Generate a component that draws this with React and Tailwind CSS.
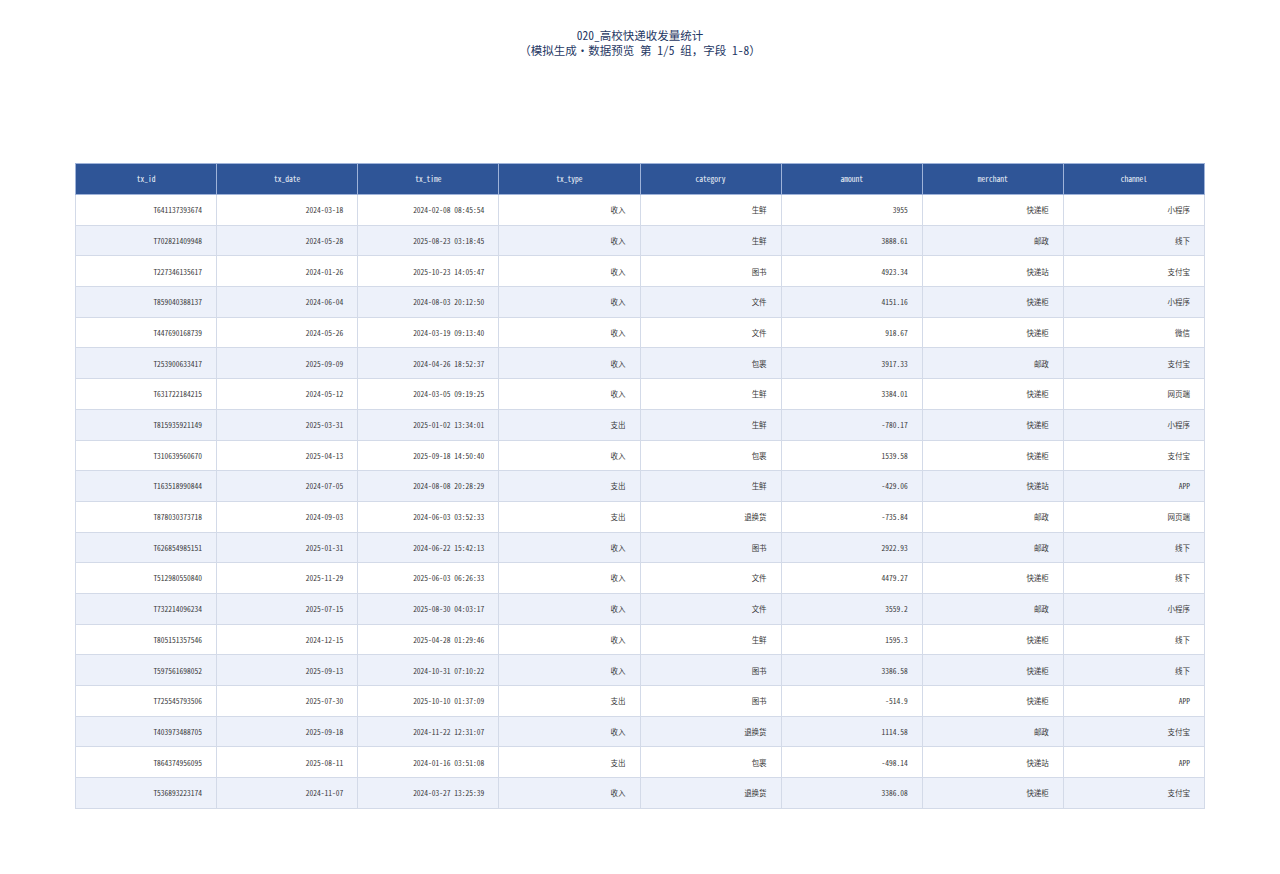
import React from "react";

const cols = ["tx_id", "tx_date", "tx_time", "tx_type", "category", "amount", "merchant", "channel"];

const rows = [
  ["T641137393674", "2024-03-18", "2024-02-08 08:45:54", "收入", "生鲜", "3955", "快递柜", "小程序"],
  ["T702821409948", "2024-05-28", "2025-08-23 03:18:45", "收入", "生鲜", "3888.61", "邮政", "线下"],
  ["T227346135617", "2024-01-26", "2025-10-23 14:05:47", "收入", "图书", "4923.34", "快递站", "支付宝"],
  ["T859040388137", "2024-06-04", "2024-08-03 20:12:50", "收入", "文件", "4151.16", "快递柜", "小程序"],
  ["T447690168739", "2024-05-26", "2024-03-19 09:13:40", "收入", "文件", "918.67", "快递柜", "微信"],
  ["T253900633417", "2025-09-09", "2024-04-26 18:52:37", "收入", "包裹", "3917.33", "邮政", "支付宝"],
  ["T631722184215", "2024-05-12", "2024-03-05 09:19:25", "收入", "生鲜", "3384.01", "快递柜", "网页端"],
  ["T815935921149", "2025-03-31", "2025-01-02 13:34:01", "支出", "生鲜", "-780.17", "快递柜", "小程序"],
  ["T310639560670", "2025-04-13", "2025-09-18 14:50:40", "收入", "包裹", "1539.58", "快递柜", "支付宝"],
  ["T163518990844", "2024-07-05", "2024-08-08 20:28:29", "支出", "生鲜", "-429.06", "快递站", "APP"],
  ["T878030373718", "2024-09-03", "2024-06-03 03:52:33", "支出", "退换货", "-735.84", "邮政", "网页端"],
  ["T626854985151", "2025-01-31", "2024-06-22 15:42:13", "收入", "图书", "2922.93", "邮政", "线下"],
  ["T512980550840", "2025-11-29", "2025-06-03 06:26:33", "收入", "文件", "4479.27", "快递柜", "线下"],
  ["T732214096234", "2025-07-15", "2025-08-30 04:03:17", "收入", "文件", "3559.2", "邮政", "小程序"],
  ["T805151357546", "2024-12-15", "2025-04-28 01:29:46", "收入", "生鲜", "1595.3", "快递柜", "线下"],
  ["T597561698052", "2025-09-13", "2024-10-31 07:10:22", "收入", "图书", "3386.58", "快递柜", "线下"],
  ["T725545793506", "2025-07-30", "2025-10-10 01:37:09", "支出", "图书", "-514.9", "快递柜", "APP"],
  ["T403973488705", "2025-09-18", "2024-11-22 12:31:07", "收入", "退换货", "1114.58", "邮政", "支付宝"],
  ["T864374956095", "2025-08-11", "2024-01-16 03:51:08", "支出", "包裹", "-498.14", "快递站", "APP"],
  ["T536893223174", "2024-11-07", "2024-03-27 13:25:39", "收入", "退换货", "3386.08", "快递柜", "支付宝"],
];

const font = { fontFamily: '"Noto Sans Mono CJK SC", "DejaVu Sans Mono", "Noto Sans CJK SC", monospace' };

export default function App() {
  return (
    <div className="w-[1280px] h-[874px] bg-white px-[75px] pt-[28px]" style={font}>
      <div className="text-center text-[11.5px] leading-[15px] text-[#1f3864]">
        <div>020_高校快递收发量统计</div>
        <div>（模拟生成·数据预览 第 1/5 组，字段 1-8）</div>
      </div>

      <table className="mt-[105px] w-[1130px] table-fixed border-collapse">
        <thead>
          <tr className="h-[31px] bg-[#2f5597]">
            {cols.map((c) => (
              <th
                key={c}
                className="border border-[#9fb3d9] text-center text-[7.5px] font-normal text-[#f2f5fb]"
              >
                {c}
              </th>
            ))}
          </tr>
        </thead>
        <tbody>
          {rows.map((r, i) => (
            <tr key={i} className={i % 2 ? "h-[30.7px] bg-[#edf1fa]" : "h-[30.7px] bg-white"}>
              {r.map((v, j) => (
                <td
                  key={j}
                  className="border border-[#d3dae8] pr-[14px] text-right text-[7.5px] text-[#3a3a3a]"
                >
                  {v}
                </td>
              ))}
            </tr>
          ))}
        </tbody>
      </table>
    </div>
  );
}
